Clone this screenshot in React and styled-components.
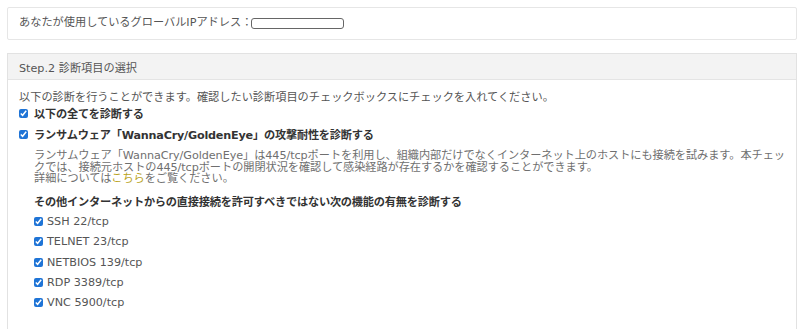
import React from "react";
import styled, { createGlobalStyle } from "styled-components";

const GlobalStyle = createGlobalStyle`
  body {
    margin: 0;
    background: #ffffff;
    font-family: "DejaVu Sans", "Noto Sans CJK JP", sans-serif;
    font-size: 11.2px;
    color: #555555;
  }
`;

const Page = styled.div`
  padding: 7px 3px 0 7px;
  display: flex;
  flex-direction: column;
  gap: 13px;
`;

const IpPanel = styled.div`
  border: 1px solid #e6e6e6;
  border-radius: 2px;
  padding: 8px 11px 9px;
  display: flex;
  align-items: center;
  line-height: 14px;
  color: #555555;
`;

const IpBox = styled.span`
  display: inline-block;
  width: 91px;
  height: 9px;
  margin-left: -1px;
  border: 1px solid #666666;
  border-radius: 3px;
`;

const Panel = styled.section`
  border: 1px solid #e2e2e2;
  border-bottom-color: #ececec;
`;

const PanelHeader = styled.div`
  background: #f3f3f3;
  border-bottom: 1px solid #e4e4e4;
  height: 25px;
  padding: 0 11px;
  display: flex;
  align-items: center;
  color: #555555;
`;

const PanelBody = styled.div`
  padding: 11px 11px 17px;
`;

const Intro = styled.p`
  margin: 0;
  line-height: 14px;
  color: #555555;
`;

const CheckRow = styled.label`
  display: flex;
  align-items: center;
  gap: ${(p) => (p.$sub ? "4px" : "6px")};
  height: ${(p) => (p.$sub ? "20.25px" : "16px")};
  margin-top: ${(p) => p.$mt || 0}px;
  font-weight: ${(p) => (p.$bold ? 700 : 400)};
  letter-spacing: ${(p) => (p.$bold ? "-0.2px" : "0")};
  color: ${(p) => (p.$bold ? "#333333" : "#555555")};
`;

const Check = styled.input.attrs({ type: "checkbox" })`
  width: 9px;
  height: 9px;
  margin: 0;
  accent-color: #1f74d6;
  flex: none;
`;

const Indented = styled.div`
  padding-left: 15px;
`;

const Description = styled.p`
  margin: 8px 0 0;
  line-height: 11.5px;
  letter-spacing: -0.06px;
  color: #6f6f6f;
`;

const MoreLink = styled.a`
  color: #b9a31c;
  text-decoration: none;
`;

const SubHeading = styled.div`
  margin-top: 10px;
  line-height: 16px;
  font-weight: 700;
  letter-spacing: -0.2px;
  color: #333333;
`;

const SubList = styled.div`
  margin-top: 1px;
  display: flex;
  flex-direction: column;
`;

const ports = [
  "SSH 22/tcp",
  "TELNET 23/tcp",
  "NETBIOS 139/tcp",
  "RDP 3389/tcp",
  "VNC 5900/tcp",
];

export default function App() {
  return (
    <>
      <GlobalStyle />
      <Page>
        <IpPanel>
          あなたが使用しているグローバルIPアドレス：<IpBox />
        </IpPanel>

        <Panel>
          <PanelHeader>Step.2 診断項目の選択</PanelHeader>
          <PanelBody>
            <Intro>
              以下の診断を行うことができます。確認したい診断項目のチェックボックスにチェックを入れてください。
            </Intro>
            <CheckRow $bold>
              <Check defaultChecked />
              以下の全てを診断する
            </CheckRow>
            <CheckRow $bold $mt={5}>
              <Check defaultChecked />
              ランサムウェア「WannaCry/GoldenEye」の攻撃耐性を診断する
            </CheckRow>
            <Indented>
              <Description>
                ランサムウェア「WannaCry/GoldenEye」は445/tcpポートを利用し、組織内部だけでなくインターネット上のホストにも接続を試みます。本チェックでは、接続元ホストの445/tcpポートの開閉状況を確認して感染経路が存在するかを確認することができます。
                <br />
                詳細については<MoreLink href="#">こちら</MoreLink>をご覧ください。
              </Description>
              <SubHeading>
                その他インターネットからの直接接続を許可すべきではない次の機能の有無を診断する
              </SubHeading>
              <SubList>
                {ports.map((p) => (
                  <CheckRow $sub key={p}>
                    <Check defaultChecked />
                    {p}
                  </CheckRow>
                ))}
              </SubList>
            </Indented>
          </PanelBody>
        </Panel>
      </Page>
    </>
  );
}
